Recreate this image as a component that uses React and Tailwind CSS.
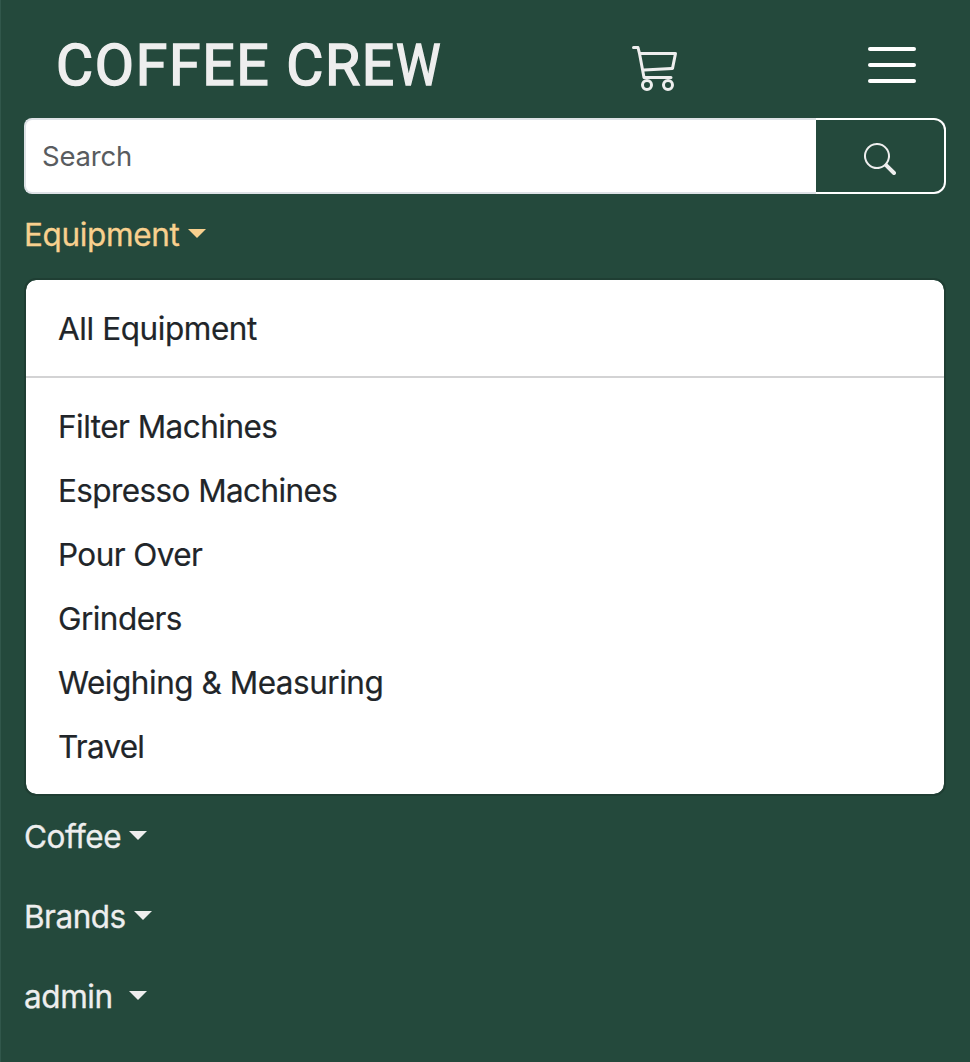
import { BsCart3, BsSearch } from "react-icons/bs";

function Caret({ className = "" }) {
  return (
    <span
      className={`block h-0 w-0 border-x-[9px] border-t-[9px] border-x-transparent border-t-current ${className}`}
    />
  );
}

function NavToggle({ label, active, tracking, gap }) {
  return (
    <button
      className={`flex h-20 w-full items-center text-[31.5px] leading-[48px] ${active ? "text-[#f8d08e]" : "text-[#eeeeee]"}`}
    >
      <span className={`pt-[2px] [-webkit-text-stroke:0.3px_currentColor] ${tracking}`}>{label}</span>
      <Caret className={`-mt-[1px] ${gap}`} />
    </button>
  );
}

const items = [
  { label: "Filter Machines", tracking: "tracking-[-0.53px]" },
  { label: "Espresso Machines", tracking: "tracking-[-0.6px]" },
  { label: "Pour Over", tracking: "tracking-[-0.6px]" },
  { label: "Grinders", tracking: "tracking-[-0.55px]" },
  { label: "Weighing & Measuring", tracking: "tracking-[-0.48px]" },
  { label: "Travel", tracking: "tracking-[-0.75px]" },
];

export default function App() {
  return (
    <div className="h-[1062px] w-full border-l border-[#31574b] bg-[#24493c] pr-6 pl-[23px] font-['Inter',sans-serif]">
      <header className="flex h-[118px] items-start">
        <h1 className="ml-8 w-[576px] pt-[30px] font-['Roboto',sans-serif] text-[57px] leading-[72px] font-normal tracking-[1.7px] whitespace-nowrap text-[#eeeeee] [-webkit-text-stroke:1.5px_#eeeeee]">
          COFFEE CRE<span className="inline-block origin-left scale-x-[0.88]">W</span>
        </h1>
        <BsCart3 size={48} className="mt-[43px] text-[#eeeeee]" />
        <button className="mt-[47px] mr-[30px] ml-auto flex w-12 flex-col gap-3" aria-label="Menu">
          <span className="h-1 rounded-full bg-white" />
          <span className="h-1 rounded-full bg-white" />
          <span className="h-1 rounded-full bg-white" />
        </button>
      </header>

      <form className="flex h-[76px]">
        <input
          placeholder="Search"
          className="w-[792px] rounded-l-[8px] border-2 border-r-0 border-[#dee2e6] bg-white px-4 pt-[1px] text-[27.5px] tracking-[-0.2px] text-[#212529] placeholder:text-[#595c5f]"
        />
        <button
          type="button"
          aria-label="Search"
          className="flex flex-1 items-center justify-center rounded-r-[12px] border-2 border-l-0 border-white pt-[6px] text-[#eeeeee]"
        >
          <BsSearch size={32} />
        </button>
      </form>

      <nav>
        <NavToggle label="Equipment" active tracking="tracking-[-0.36px]" gap="ml-[9px]" />
        <div className="mt-1 rounded-[12px] border-2 border-[#1f3e33] bg-white bg-clip-padding py-4 text-[31.5px] leading-[66px] text-[#212529] [-webkit-text-stroke:0.2px_currentColor]">
          <a className="block h-16 px-8 tracking-[-0.43px]">All Equipment</a>
          <hr className="my-4 border-t-2 border-[#d3d3d4]" />
          {items.map((item) => (
            <a key={item.label} className={`block h-16 px-8 ${item.tracking}`}>
              {item.label}
            </a>
          ))}
        </div>
        <NavToggle label="Coffee" tracking="tracking-[-0.45px]" gap="ml-[8px]" />
        <NavToggle label="Brands" tracking="tracking-[-0.5px]" gap="ml-[8px]" />
        <NavToggle label="admin" tracking="tracking-[-0.4px]" gap="ml-[16px]" />
      </nav>
    </div>
  );
}
